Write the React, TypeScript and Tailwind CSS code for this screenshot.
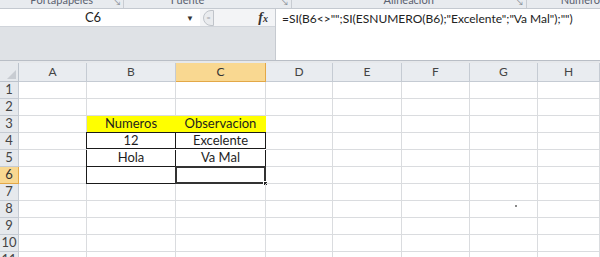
import React from "react";

const COLS: { name: string; w: number }[] = [
  { name: "A", w: 68 },
  { name: "B", w: 89 },
  { name: "C", w: 90 },
  { name: "D", w: 67 },
  { name: "E", w: 69 },
  { name: "F", w: 68 },
  { name: "G", w: 68 },
  { name: "H", w: 62 },
];

const ROWS = [1, 2, 3, 4, 5, 6, 7, 8, 9, 10, 11];

type CellSpec = { text?: string; yellow?: boolean; box?: boolean; sel?: boolean };

function cellSpec(r: number, c: string): CellSpec | null {
  if (r === 3 && c === "B") return { text: "Numeros", yellow: true };
  if (r === 3 && c === "C") return { text: "Observacion", yellow: true };
  if (r === 4 && c === "B") return { text: "12", box: true };
  if (r === 4 && c === "C") return { text: "Excelente", box: true };
  if (r === 5 && c === "B") return { text: "Hola", box: true };
  if (r === 5 && c === "C") return { text: "Va Mal", box: true };
  if (r === 6 && c === "B") return { text: "", box: true };
  if (r === 6 && c === "C") return { text: "", box: true, sel: true };
  return null;
}

export default function App() {
  return (
    <div className="w-[600px] h-[257px] overflow-hidden bg-white relative font-['Lato','Liberation_Sans',sans-serif]">
      {/* Ribbon group labels (cut off at top edge as in the screenshot) */}
      <div className="flex h-[9px] overflow-hidden bg-[#e8ebef] border-b border-[#c4c9d0] text-[11px] text-[#5b6270]">
        <div className="relative w-[127px] border-r border-[#c8ccd2] flex justify-center">
          <span className="-mt-[7px] leading-[14px]">Portapapeles</span>
          <span className="absolute right-[3px] -top-[4px] text-[8px] text-[#8a9099]">↘</span>
        </div>
        <div className="relative w-[171px] border-r border-[#c8ccd2] flex justify-center">
          <span className="-mt-[7px] leading-[14px] ml-[-40px]">Fuente</span>
          <span className="absolute right-[3px] -top-[4px] text-[8px] text-[#8a9099]">↘</span>
        </div>
        <div className="relative w-[240px] border-r border-[#c8ccd2] flex justify-center">
          <span className="-mt-[7px] leading-[14px]">Alineación</span>
          <span className="absolute right-[3px] -top-[4px] text-[8px] text-[#8a9099]">↘</span>
        </div>
        <div className="flex-1 pl-[34px]">
          <span className="-mt-[7px] block leading-[14px]">Número</span>
        </div>
      </div>

      {/* Name box + formula bar */}
      <div className="flex h-[51px]">
        <div className="w-[275px] flex flex-col bg-[#dfe2e6]">
          <div className="h-[18px] flex items-center bg-[#f3f4f6] border-b border-[#d0d4da]">
            <div className="w-[200px] h-full bg-white flex items-center relative">
              <span className="flex-1 text-center text-[13px] text-[#222]">C6</span>
              <span className="w-[14px] text-[8px] text-[#333]">▼</span>
            </div>
            <div className="ml-[3px] w-[11px] h-[16px] rounded-l-full border border-[#c0c4ca] bg-[#e9ebee] flex items-center justify-center">
              <span className="text-[7px] text-[#a0a4aa] leading-none">=</span>
            </div>
            <div className="flex-1" />
            <span className="text-[14px] italic font-bold font-['Liberation_Serif',serif] text-[#333] mr-[7px]">
              f<span className="text-[10px]">x</span>
            </span>
          </div>
          <div className="flex-1" />
        </div>
        <div className="flex-1 bg-white border-l border-[#c6cad0] pl-[6px] pt-[1px] text-[12px] text-[#222] leading-[17px] whitespace-nowrap">
          =SI(B6&lt;&gt;"";SI(ESNUMERO(B6);"Excelente";"Va Mal");"")
        </div>
      </div>

      {/* gap */}
      <div className="h-[3px] bg-[#e6e8eb] border-t border-[#b9bec6]" />

      {/* Grid */}
      <div className="flex flex-col">
        {/* Header row */}
        <div className="flex h-[19px]">
          <div className="w-[19px] h-full bg-[#e6e9ed] border-r border-b border-[#bcc3cc] relative">
            <div className="absolute right-[2px] bottom-[2px] w-0 h-0 border-l-[9px] border-l-transparent border-b-[9px] border-b-[#c8ccd2]" />
          </div>
          {COLS.map((c) => (
            <div
              key={c.name}
              style={{ width: c.w }}
              className={
                c.name === "C"
                  ? "h-full flex items-center justify-center text-[12px] text-[#333] bg-[#f9d891] border-r border-b border-[#e3a847]"
                  : "h-full flex items-center justify-center text-[12px] text-[#444] bg-[#e9ecf0] border-r border-b border-[#c5cbd3]"
              }
            >
              {c.name}
            </div>
          ))}
        </div>
        {ROWS.map((r) => (
          <div key={r} className="flex h-[17px]">
            <div
              className={
                r === 6
                  ? "w-[19px] h-full flex items-center justify-center text-[13px] text-[#333] bg-[#f9d891] border-r border-b border-[#e3a847]"
                  : "w-[19px] h-full flex items-center justify-center text-[13px] text-[#444] bg-[#e6e9ed] border-r border-b border-[#c5cbd3]"
              }
            >
              {r}
            </div>
            {COLS.map((c) => {
              const s = cellSpec(r, c.name);
              let cls =
                "h-full flex items-center justify-center text-[13px] text-[#1e1e1e] whitespace-nowrap relative ";
              if (s?.yellow) cls += "bg-[#ffff00] border-b border-r border-[#ffff00]";
              else if (s?.box)
                cls +=
                  "border-b border-r border-[#1a1a1a] " +
                  (r === 4 ? "border-t -mt-[1px] h-[18px] " : "") +
                  (c.name === "B" ? "border-l -ml-[1px] " : "");
              else cls += "border-r border-b border-[#dadcdf]";
              return (
                <div
                  key={c.name}
                  style={{ width: c.name === "B" && s?.box ? c.w + 1 : c.w }}
                  className={cls}
                >
                  {s?.text}
                  {s?.sel && (
                    <>
                      <div className="absolute -left-[1px] -top-[1px] -right-[1px] -bottom-[1px] border-2 border-[#333]" />
                      <div className="absolute -right-[3px] -bottom-[3px] w-[5px] h-[5px] bg-[#222] border border-white" />
                    </>
                  )}
                </div>
              );
            })}
          </div>
        ))}
      </div>

      {/* stray cursor dot */}
      <div className="absolute left-[515px] top-[205px] w-[2px] h-[2px] bg-[#888]" />
    </div>
  );
}
